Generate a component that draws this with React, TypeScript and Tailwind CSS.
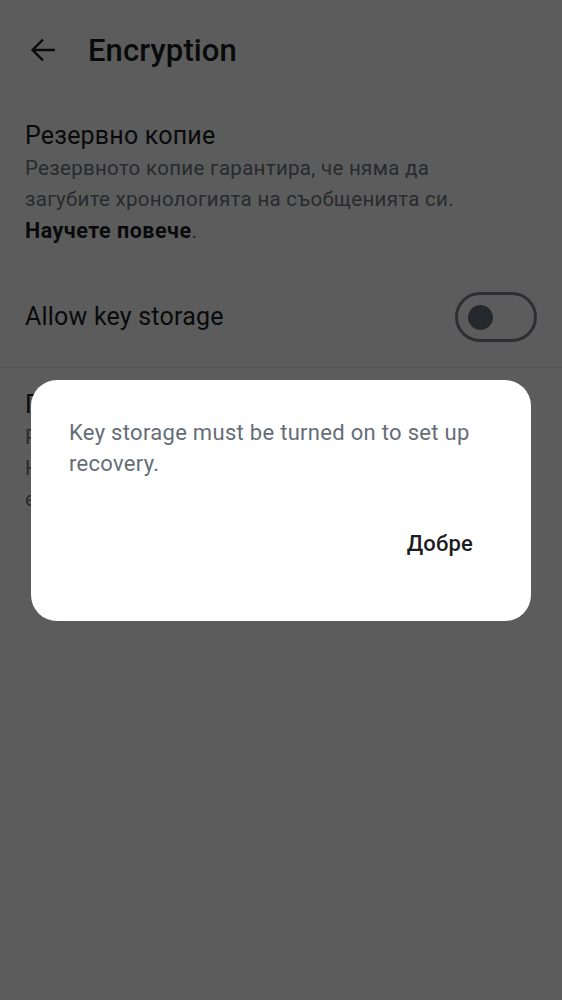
import { useState } from 'react';

function BackArrow() {
  return (
    <svg width="36" height="36" viewBox="0 0 24 24" className="fill-[#1b1d22]">
      <path d="M20 11.2H6.9l5.6-5.6L11.4 4.5 3.9 12l7.5 7.5 1.1-1.1-5.6-5.6H20z" />
    </svg>
  );
}

export default function App() {
  const [keyStorage, setKeyStorage] = useState(false);

  return (
    <div className="relative min-h-[1000px] bg-white font-['Roboto','Noto_Sans',sans-serif] text-[#1b1d22]">
      {/* Top bar */}
      <header className="flex h-[100px] items-center">
        <button className="ml-[25px] flex h-[36px] w-[36px] items-center justify-center">
          <BackArrow />
        </button>
        <h1 className="ml-[27px] text-[31px] font-medium leading-none tracking-[0.1px]">Encryption</h1>
      </header>

      {/* Backup section */}
      <section className="pl-[25px] pr-[60px] pt-[20px]">
        <h2 className="text-[25px] leading-[32px] tracking-[0.2px]">Резервно копие</h2>
        <p className="mt-[1px] text-[20.5px] leading-[31px] tracking-[0.3px] text-[#6f7680]">
          Резервното копие гарантира, че няма да загубите хронологията на съобщенията си.{' '}
          <span className="text-[21.5px] font-bold tracking-[0.5px] text-[#1b1d22]">Научете повече</span>.
        </p>
      </section>

      <div className="mt-[20px] flex h-[100px] items-center justify-between px-[25px]">
        <span className="text-[25px] tracking-[0.2px]">Allow key storage</span>
        <button
          onClick={() => setKeyStorage(!keyStorage)}
          className="flex h-[50px] w-[82px] items-center rounded-full border-[3px] border-[#7d848d] pl-[10px]"
        >
          <span className="h-[25px] w-[25px] rounded-full bg-[#6a717a]" />
        </button>
      </div>
      <div className="h-px bg-[#ebebeb]" />

      {/* Recovery section (behind dialog) */}
      <section className="px-[25px] pt-[21px]">
        <h2 className="text-[25px] leading-[32px] tracking-[0.2px]">Промяна на ключа</h2>
        <p className="mt-[1px] text-[20.5px] leading-[31px] tracking-[0.3px] text-[#6f7680]">
          Ресетнете ключа си, ако сте го загубили.<br />
          Нужни са ви данните за вход и достъп<br />
          е нужен до всички устройства.
        </p>
      </section>

      {/* Dialog */}
      <div className="fixed inset-0 flex items-center justify-center bg-black/[0.64] px-[31px]">
        <div className="w-full rounded-[26px] bg-white pb-[56px] pl-[38px] pr-[42px] pt-[37px]">
          <p className="text-[22px] leading-[31px] tracking-[0.3px] text-[#656d77]">
            Key storage must be turned on to set up recovery.
          </p>
          <div className="mt-[44px] flex justify-end">
            <button className="px-[16px] py-[6px] text-[22px] font-medium leading-[30px] tracking-[0.2px] text-[#1b1d22]">
              Добре
            </button>
          </div>
        </div>
      </div>
    </div>
  );
}
